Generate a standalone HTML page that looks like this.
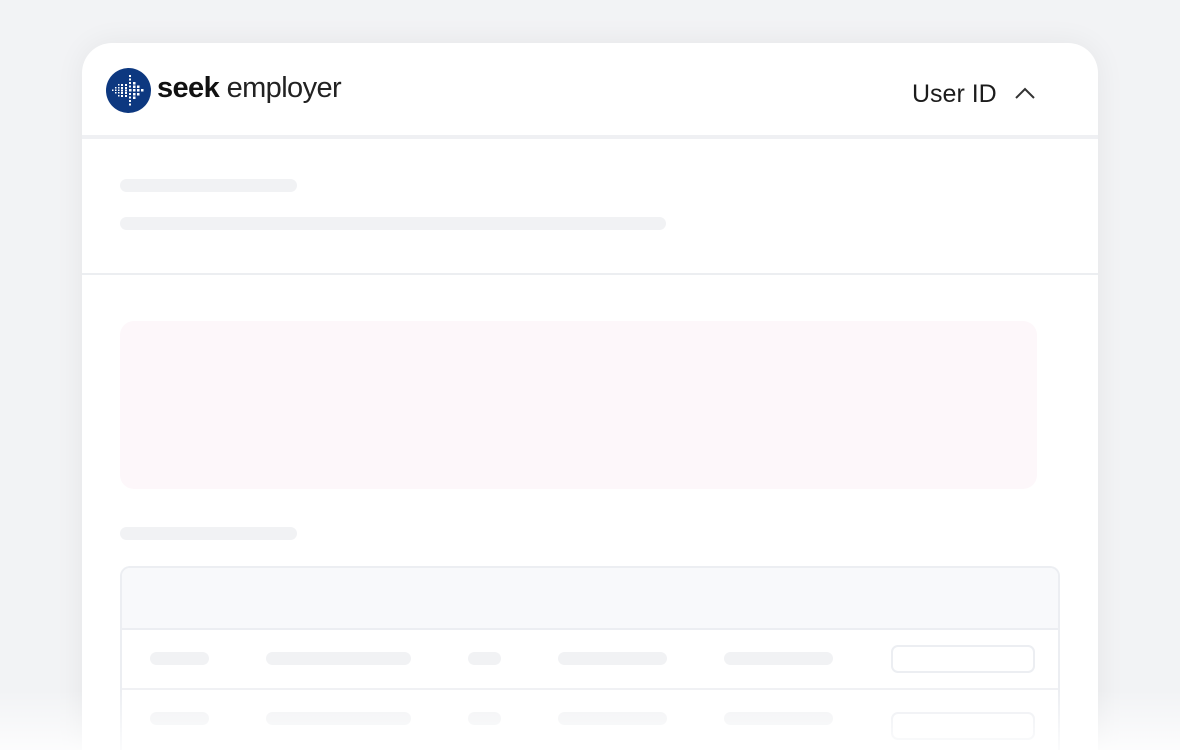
<!DOCTYPE html>
<html style="width:1180px;height:750px;overflow:hidden"><head><style>
body{margin:0;width:1180px;height:750px;overflow:hidden;background:#f2f3f5;font-family:"Liberation Sans",sans-serif;position:relative}
.card{position:absolute;left:82px;top:43px;width:1016px;height:707px;background:#fff;border-radius:30px 30px 0 0;box-shadow:0 0 30px rgba(0,0,0,0.06);overflow:hidden}
.hdr{position:absolute;left:0;top:0;width:1016px;height:92px;border-bottom:4px solid #eff0f3}
.bar{position:absolute;background:#f1f2f4;border-radius:7px;height:13px}
.sep{position:absolute;left:0;top:230px;width:1016px;height:2px;background:#eceef1}
.pink{position:absolute;left:38px;top:278px;width:917px;height:168px;background:#fdf7fa;border-radius:14px}
.tbl{position:absolute;left:38px;top:523px;width:936px;height:182px;border:2px solid #eceef2;border-bottom:none;border-radius:10px 10px 0 0;overflow:hidden}
.th{height:60px;background:#f8f9fb;border-bottom:2px solid #eceef2}
.row{height:58px;border-bottom:2px solid #f0f1f4;position:relative}
.row .bar{top:22px}
.btn{position:absolute;left:769px;top:15px;width:140px;height:24px;border:2px solid #eceef2;border-radius:7px}
.fade{position:absolute;left:0;top:690px;width:1180px;height:60px;background:linear-gradient(rgba(255,255,255,0),rgba(255,255,255,0.8))}
</style></head><body>
<div class="card">
 <div class="hdr">
  <svg style="position:absolute;left:24px;top:25px" width="45" height="45" viewBox="0 0 45 45">
   <circle cx="22.5" cy="22.5" r="22.5" fill="#0d3880"/>
   <g fill="#fff">
    <rect x="6" y="21.5" width="1.5" height="1.5"/><rect x="9" y="19" width="1.5" height="1.5"/><rect x="9" y="21.5" width="1.5" height="1.5"/><rect x="9" y="24" width="1.5" height="1.5"/>
    <rect x="12" y="16" width="1.5" height="1.5"/><rect x="12" y="19" width="1.5" height="1.5"/><rect x="12" y="21.5" width="1.5" height="1.5"/><rect x="12" y="24" width="1.5" height="1.5"/><rect x="12" y="27" width="1.5" height="1.5"/>
    <rect x="15" y="16" width="2" height="2"/><rect x="15" y="19" width="2" height="2"/><rect x="15" y="21.5" width="2" height="2"/><rect x="15" y="24" width="2" height="2"/><rect x="15" y="27" width="2" height="2"/>
    <rect x="19" y="16" width="2" height="2"/><rect x="19" y="19" width="2" height="2"/><rect x="19" y="21.5" width="2" height="2"/><rect x="19" y="24" width="2" height="2"/><rect x="19" y="27" width="2" height="2"/>
    <rect x="23" y="7" width="2" height="2"/><rect x="23" y="10.5" width="2" height="2"/><rect x="23" y="14" width="2" height="2"/><rect x="23" y="17.5" width="2" height="2"/><rect x="23" y="21" width="2.5" height="2.5"/><rect x="23" y="25" width="2" height="2"/><rect x="23" y="28.5" width="2" height="2"/><rect x="23" y="32" width="2" height="2"/><rect x="23" y="35.5" width="2" height="2"/>
    <rect x="27" y="14" width="2.5" height="2.5"/><rect x="27" y="17.5" width="2.5" height="2.5"/><rect x="27" y="21" width="2.5" height="2.5"/><rect x="27" y="25" width="2.5" height="2.5"/><rect x="27" y="28.5" width="2.5" height="2.5"/>
    <rect x="31" y="17.5" width="2.5" height="2.5"/><rect x="31" y="21" width="2.5" height="2.5"/><rect x="31" y="25" width="2.5" height="2.5"/><rect x="35" y="21" width="2.5" height="2.5"/>
   </g>
  </svg>
  <div style="position:absolute;left:75px;top:29px;font-size:29px;color:#111;letter-spacing:-0.6px"><b>seek</b> <span style="font-weight:300;color:#222">employer</span></div>
  <div style="position:absolute;left:830px;top:37px;font-size:25px;color:#1c1c1c">User ID</div>
  <svg style="position:absolute;left:932px;top:43px" width="22" height="14" viewBox="0 0 22 14"><path d="M2 12 L11 3 L20 12" fill="none" stroke="#333" stroke-width="2"/></svg>
 </div>
 <div class="bar" style="left:38px;top:136px;width:177px"></div>
 <div class="bar" style="left:38px;top:174px;width:546px"></div>
 <div class="sep"></div>
 <div class="pink"></div>
 <div class="bar" style="left:38px;top:484px;width:177px"></div>
 <div class="tbl">
  <div class="th"></div>
  <div class="row"><div class="bar" style="left:28px;width:59px"></div><div class="bar" style="left:144px;width:145px"></div><div class="bar" style="left:346px;width:33px"></div><div class="bar" style="left:436px;width:109px"></div><div class="bar" style="left:602px;width:109px"></div><div class="btn"></div></div>
  <div class="row" style="border-bottom:none"><div class="bar" style="left:28px;width:59px"></div><div class="bar" style="left:144px;width:145px"></div><div class="bar" style="left:346px;width:33px"></div><div class="bar" style="left:436px;width:109px"></div><div class="bar" style="left:602px;width:109px"></div><div class="btn" style="top:22px"></div></div>
 </div>
</div>
<div class="fade"></div>
</body></html>
